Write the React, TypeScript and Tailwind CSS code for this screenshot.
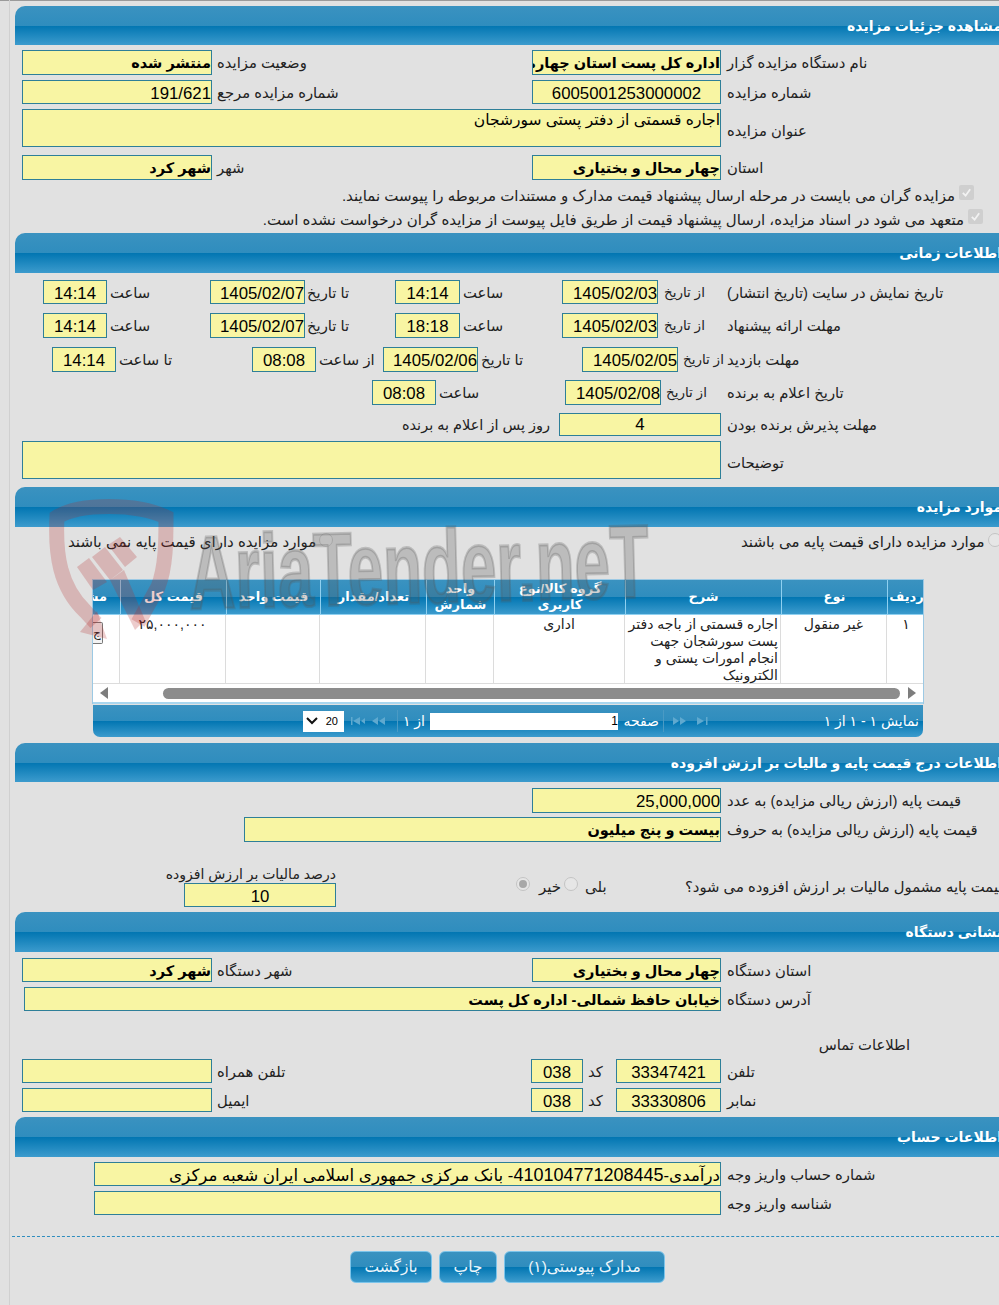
import React from "react";

const font = { fontFamily: '"Liberation Sans","DejaVu Sans",sans-serif' };
const grad = "bg-[linear-gradient(to_bottom,#3a92c0_0%,#2f8dbe_50%,#0276b2_51%,#3c9bcd_100%)]";

function Head({ children, className = "" }: { children: React.ReactNode; className?: string }) {
  return (
    <div dir="rtl" className={"h-[39px] w-[1000px] rounded-tl-[10px] bg-[linear-gradient(to_bottom,#3a92c0_0%,#2f8dbe_50%,#0276b2_51%,#3c9bcd_100%)] text-white font-bold text-[14px] leading-[40px] pr-[13px] whitespace-nowrap " + className}>
      {children}
    </div>
  );
}

function F({ className, children, center, bold }: { className: string; children?: React.ReactNode; center?: boolean; bold?: boolean }) {
  return (
    <div dir="rtl" className={"shrink-0 overflow-hidden whitespace-nowrap border border-[#2e7f98] bg-[#f8f5a3] text-black leading-[25px] " + (center ? "text-center " : "text-right ") + (bold ? "font-bold text-[14.500px] " : "text-[16.800px] ") + className}>
      {children}
    </div>
  );
}

function L({ className = "", children }: { className?: string; children: React.ReactNode }) {
  return (
    <div dir="rtl" className={"shrink-0 whitespace-nowrap text-left text-[14.800px] text-[#222] pt-[2px] " + className}>
      {children}
    </div>
  );
}

function Radio({ className = "", checked }: { className?: string; checked?: boolean }) {
  return (
    <span className={"shrink-0 w-[14px] h-[14px] rounded-full border border-[#c4c4c4] bg-[#e6e6e6] flex items-center justify-center " + className}>
      {checked && <span className="w-[8px] h-[8px] rounded-full bg-[#a8a8a8]" />}
    </span>
  );
}

function Check() {
  return (
    <span className="shrink-0 w-[15px] h-[15px] rounded-[2px] bg-[#cfcfcf] flex items-center justify-center">
      <svg width="11" height="11" viewBox="0 0 12 12" fill="none" stroke="#f2f2f2" strokeWidth="2"><path d="M2 6.5l3 3 5-7" /></svg>
    </span>
  );
}

function PagerIcon({ d }: { d: string }) {
  return (
    <svg width="16" height="10" viewBox="0 0 16 10" fill="#5fa9cf"><path d={d} /></svg>
  );
}

const cols = [27, 106, 94, 106, 68, 131, 156, 106, 38];
const heads: React.ReactNode[] = ["مشاهده", "قیمت کل", "قیمت واحد", "تعداد/مقدار", "واحد شمارش", "گروه کالا/نوع کاربری", "شرح", "نوع", "ردیف"];

function Table() {
  return (
    <div className="ml-[77px] mt-[28px] w-[832px] h-[126px] overflow-hidden">
      <div className="border-x border-t border-[#9cc9e4] bg-white">
        <div className={"flex h-[35px] border-b border-[#8fd0f0] " + grad}>
          {heads.map((h, i) => (
            <div key={i} dir="rtl" style={{ width: cols[i] }} className={"shrink-0 overflow-hidden border-l border-[#8fd0f0] first:border-l-0 flex items-center text-center text-white font-bold text-[13px] leading-[16px] " + (i === 0 ? "justify-start whitespace-nowrap pr-[13px]" : "justify-center whitespace-normal px-[2px]")}>
              {h}
            </div>
          ))}
        </div>
        <div className="flex h-[69px] border-b border-[#dcdcdc] text-[14px] text-[#222]">
          <div style={{ width: cols[0] }} className="shrink-0 border-r border-[#dcdcdc] overflow-hidden pt-[7px]">
            <div className="w-[10px] h-[22px] border border-l-0 border-[#777] rounded-r-[2px] bg-[#f3f3f3] text-[12px] leading-[20px] overflow-hidden">ج</div>
          </div>
          <div dir="rtl" style={{ width: cols[1] }} className="shrink-0 border-r border-[#dcdcdc] text-center leading-[17px] pt-[1px]">۲۵,۰۰۰,۰۰۰</div>
          <div style={{ width: cols[2] }} className="shrink-0 border-r border-[#dcdcdc]" />
          <div style={{ width: cols[3] }} className="shrink-0 border-r border-[#dcdcdc]" />
          <div style={{ width: cols[4] }} className="shrink-0 border-r border-[#dcdcdc]" />
          <div dir="rtl" style={{ width: cols[5] }} className="shrink-0 border-r border-[#dcdcdc] text-center leading-[17px] pt-[1px]">اداری</div>
          <div dir="rtl" style={{ width: cols[6] }} className="shrink-0 border-r border-[#dcdcdc] pr-[2px] pl-[2px] pt-[1px] leading-[17px] text-right">اجاره قسمتی از باجه دفتر پست سورشجان جهت انجام امورات پستی و الکترونیک</div>
          <div dir="rtl" style={{ width: cols[7] }} className="shrink-0 border-r border-[#dcdcdc] text-center leading-[17px] pt-[1px]">غیر منقول</div>
          <div dir="rtl" style={{ width: cols[8] }} className="shrink-0 text-center leading-[17px] pt-[1px]">۱</div>
        </div>
        <div className="flex items-center h-[20px] pl-[7px] border-b-[2px] border-[#a9d6ee]">
          <svg className="shrink-0" width="8" height="12" viewBox="0 0 8 12" fill="#7d7d7d"><path d="M8 0v12L0 6z" /></svg>
          <div className="shrink-0 w-[737px] h-[11px] rounded-full bg-[#8c8c8c] ml-[55px]" />
          <svg className="shrink-0 ml-[8px]" width="8" height="12" viewBox="0 0 8 12" fill="#7d7d7d"><path d="M0 0v12l8-6z" /></svg>
        </div>
      </div>
    </div>
  );
}

function Pager() {
  return (
    <div className={"ml-[78px] w-[830px] h-[32px] rounded-b-[7px] flex items-center text-white text-[14px] " + grad}>
      <div className="ml-[210px] w-[41px] h-[21px] bg-white text-black flex items-center justify-between pl-[3px] pr-[6px] text-[11px]">
        <svg width="12" height="8" viewBox="0 0 12 8" fill="none" stroke="#111" strokeWidth="2"><path d="M1 1l5 5 5-5" /></svg>
        <span>20</span>
      </div>
      <div className="ml-[6px] flex gap-[4px]">
        <PagerIcon d="M1 1h1.500v8H1zM10 1v8L3 5zM15 2v6l-4-3z" />
        <PagerIcon d="M8 1v8L2 5zM15 1v8L9 5z" />
      </div>
      <div className="ml-[11px] w-px h-[22px] bg-[#4a9ac4]" />
      <div dir="rtl" className="ml-[6px] w-[21px] text-left whitespace-nowrap">از ۱</div>
      <div className="ml-[5px] w-[188px] h-[17px] bg-white text-black text-right text-[12px] leading-[17px]">1</div>
      <div dir="rtl" className="ml-[5px] w-[36px] whitespace-nowrap">صفحه</div>
      <div className="ml-[4px] w-px h-[22px] bg-[#4a9ac4]" />
      <div className="ml-[8px] flex gap-[8px]">
        <PagerIcon d="M1 1v8l6-4zM8 1v8l6-4z" />
        <PagerIcon d="M1 1v8l7-4zM10 1h1.500v8H10z" />
      </div>
      <div dir="rtl" className="ml-auto pr-[4px] whitespace-nowrap">نمایش ۱ - ۱ از ۱</div>
    </div>
  );
}

function Watermark() {
  return (
    <svg className="absolute left-[40px] top-[495px] pointer-events-none" width="640" height="170" viewBox="0 0 640 170">
      <g stroke="#b52a2a" strokeOpacity="0.24" fill="none" strokeWidth="15">
        <path d="M98 128 L118 92 C126 72 126 45 126 22 C96 8 40 8 17 22 C15 60 20 92 45 116 L56 128" />
      </g>
      <g fill="#b52a2a" fillOpacity="0.24">
        <path d="M57 116L67 144 40 137z" />
        <path d="M68 50L80 42 97 62 85 72z" />
        <path d="M52 62L65 52 83 75 70 85z" />
        <path d="M37 72L49 63 67 87 53 95z" />
        <path d="M70 85L84 75 105 125 95 135z" />
      </g>
      <text x="150" y="114" transform="rotate(-1.500 150 114)" textLength="460" lengthAdjust="spacingAndGlyphs" fontFamily="Liberation Sans, sans-serif" fontWeight="700" fontSize="104" fill="#555" fillOpacity="0.26" stroke="#555" strokeOpacity="0.26" strokeWidth="3">AriaTender.neT</text>
    </svg>
  );
}

export default function App() {
  return (
    <div style={font} className="relative w-[999px] h-[1305px] overflow-hidden bg-[#e1e1e1] text-[15px]">
      <div className="absolute left-0 top-0 w-full h-[1px] bg-[#9a9a9a]" />
      <div className="absolute left-[9px] top-0 w-px h-full bg-[#d0d0d0]" />
      <div className="pl-[15px] pt-[6px] w-[1015px]">
        <Head>مشاهده جزئیات مزایده</Head>
        <div className="flex items-center mt-[5px] ml-[7px] h-[25px]">
          <F bold className="w-[190px] h-[25px]">منتشر شده</F>
          <L className="ml-[5px] w-[315px]">وضعیت مزایده</L>
          <F bold className="w-[189px] h-[25px]">اداره کل پست استان چهارمحال و بختیاری</F>
          <L className="ml-[6px]">نام دستگاه مزایده گزار</L>
        </div>
        <div className="flex items-center mt-[5px] ml-[7px] h-[24px]">
          <F className="w-[190px] h-[24px]">191/621</F>
          <L className="ml-[5px] w-[315px]">شماره مزایده مرجع</L>
          <F center className="w-[189px] h-[24px]">6005001253000002</F>
          <L className="ml-[6px]">شماره مزایده</L>
        </div>
        <div className="flex items-center mt-[5px] ml-[7px] h-[38px]">
          <F className="w-[699px] h-[38px] !text-[15.500px] !leading-[20px]">اجاره قسمتی از دفتر پستی سورشجان</F>
          <L className="ml-[6px] !pt-[6px]">عنوان مزایده</L>
        </div>
        <div className="flex items-center mt-[8px] ml-[7px] h-[25px]">
          <F bold className="w-[190px] h-[25px]">شهر کرد</F>
          <L className="ml-[5px] w-[315px]">شهر</L>
          <F bold className="w-[189px] h-[25px]">چهار محال و بختیاری</F>
          <L className="ml-[6px]">استان</L>
        </div>
        <div dir="rtl" className="flex items-center gap-[4px] mt-[4px] mr-[41px] h-[24px] whitespace-nowrap text-[#222]">
          <span className="mt-[-7px] flex"><Check /></span>
          <span>مزایده گران می بایست در مرحله ارسال پیشنهاد قیمت مدارک و مستندات مربوطه را پیوست نمایند.</span>
        </div>
        <div dir="rtl" className="flex items-center gap-[4px] mr-[32px] h-[24px] whitespace-nowrap text-[#222]">
          <span className="mt-[-7px] flex"><Check /></span>
          <span>متعهد می شود در اسناد مزایده، ارسال پیشنهاد قیمت از طریق فایل پیوست از مزایده گران درخواست نشده است.</span>
        </div>
        <Head className="mt-[1px] !h-[40px]">اطلاعات زمانی</Head>

        <div className="flex items-center mt-[7px] ml-[28px] h-[24px]">
          <F center className="w-[64px] h-[24px]">14:14</F>
          <L className="ml-[3px] w-[100px]">ساعت</L>
          <F className="w-[95px] h-[24px]">1405/02/07</F>
          <L className="ml-[2px] w-[88px]">تا تاریخ</L>
          <F center className="w-[65px] h-[24px]">14:14</F>
          <L className="ml-[3px] w-[99px]">ساعت</L>
          <F className="w-[96px] h-[24px]">1405/02/03</F>
          <L className="ml-[6px] w-[63px] !text-[13.500px]">از تاریخ</L>
          <L>تاریخ نمایش در سایت (تاریخ انتشار)</L>
        </div>
        <div className="flex items-center mt-[9px] ml-[28px] h-[25px]">
          <F center className="w-[64px] h-[25px]">14:14</F>
          <L className="ml-[3px] w-[100px]">ساعت</L>
          <F className="w-[95px] h-[25px]">1405/02/07</F>
          <L className="ml-[2px] w-[88px]">تا تاریخ</L>
          <F center className="w-[65px] h-[25px]">18:18</F>
          <L className="ml-[3px] w-[99px]">ساعت</L>
          <F className="w-[96px] h-[25px]">1405/02/03</F>
          <L className="ml-[6px] w-[63px] !text-[13.500px]">از تاریخ</L>
          <L>مهلت ارائه پیشنهاد</L>
        </div>
        <div className="flex items-center mt-[9px] ml-[37px] h-[25px]">
          <F center className="w-[64px] h-[25px]">14:14</F>
          <L className="ml-[3px] w-[133px]">تا ساعت</L>
          <F center className="w-[64px] h-[25px]">08:08</F>
          <L className="ml-[3px] w-[64px]">از ساعت</L>
          <F className="w-[95px] h-[25px]">1405/02/06</F>
          <L className="ml-[3px] w-[101px]">تا تاریخ</L>
          <F className="w-[96px] h-[25px]">1405/02/05</F>
          <L className="ml-[5px] w-[44px] !text-[13.500px]">از تاریخ</L>
          <L>مهلت بازدید</L>
        </div>
        <div className="flex items-center mt-[8px] ml-[357px] h-[25px]">
          <F center className="w-[64px] h-[25px]">08:08</F>
          <L className="ml-[3px] w-[126px]">ساعت</L>
          <F className="w-[96px] h-[25px]">1405/02/08</F>
          <L className="ml-[5px] w-[61px] !text-[13.500px]">از تاریخ</L>
          <L>تاریخ اعلام به برنده</L>
        </div>
        <div className="flex items-center mt-[8px] h-[23px]">
          <div dir="rtl" className="w-[535px] shrink-0 text-[14.500px] text-[#222] text-right whitespace-nowrap pt-[2px]">روز پس از اعلام به برنده</div>
          <F center className="ml-[9px] w-[162px] h-[23px] !leading-[21px]">4</F>
          <L className="ml-[6px]">مهلت پذیرش برنده بودن</L>
        </div>
        <div className="flex items-center mt-[5px] ml-[7px] h-[38px]">
          <F className="w-[699px] h-[38px]" />
          <L className="ml-[6px] !pt-[6px]">توضیحات</L>
        </div>
        <Head className="mt-[8px] !h-[40px]">موارد مزایده</Head>

        <div className="relative">
          <div dir="rtl" className="absolute left-[726px] top-[4px] h-[22px] flex items-center gap-[3px] whitespace-nowrap text-[#222]">
            <Radio className="mt-[-4px]" />
            <span>موارد مزایده دارای قیمت پایه می باشند</span>
          </div>
          <div dir="rtl" className="absolute left-[53px] top-[4px] h-[22px] flex items-center gap-[3px] whitespace-nowrap text-[#222]">
            <Radio className="mt-[-4px]" />
            <span>موارد مزایده دارای قیمت پایه نمی باشند</span>
          </div>
        </div>
        <div className="pt-[24px]">
          <Table />
          <Pager />
        </div>

        <Head className="mt-[6px]">اطلاعات درج قیمت پایه و مالیات بر ارزش افزوده</Head>
        <div className="flex items-center mt-[6px] ml-[517px] h-[25px]">
          <F className="w-[189px] h-[25px]">25,000,000</F>
          <L className="ml-[6px]">قیمت پایه (ارزش ریالی مزایده) به عدد</L>
        </div>
        <div className="flex items-center mt-[4px] ml-[229px] h-[25px]">
          <F bold className="w-[477px] h-[25px]">بیست و پنج میلیون</F>
          <L className="ml-[6px]">قیمت پایه (ارزش ریالی مزایده) به حروف</L>
        </div>
        <div className="flex items-end mt-[24px] ml-[146px] h-[41px]">
          <div className="w-[175px] shrink-0 flex flex-col items-end">
            <div dir="rtl" className="text-[14px] leading-[16px] text-[#222] whitespace-nowrap">درصد مالیات بر ارزش افزوده</div>
            <F center className="w-[152px] h-[24px] mt-[1px]">10</F>
          </div>
          <div className="ml-[180px] mb-[8px] h-[24px] flex items-center whitespace-nowrap text-[#222]">
            <Radio className="mt-[-6px]" checked />
            <span className="ml-[9px] w-[21px]">خیر</span>
            <Radio className="ml-[4px] mt-[-6px]" />
            <span className="ml-[7px] w-[100px] text-left">بلی</span>
            <span dir="rtl" className="text-[14.800px]">قیمت پایه مشمول مالیات بر ارزش افزوده می شود؟</span>
          </div>
        </div>

        <Head className="mt-[5px] !h-[40px]">نشانی دستگاه</Head>
        <div className="flex items-center mt-[6px] ml-[7px] h-[24px]">
          <F bold className="w-[190px] h-[24px]">شهر کرد</F>
          <L className="ml-[5px] w-[315px]">شهر دستگاه</L>
          <F bold className="w-[189px] h-[24px]">چهار محال و بختیاری</F>
          <L className="ml-[6px]">استان دستگاه</L>
        </div>
        <div className="flex items-center mt-[5px] ml-[9px] h-[24px]">
          <F bold className="w-[697px] h-[24px]">خیابان حافظ شمالی- اداره کل پست</F>
          <L className="ml-[6px]">آدرس دستگاه</L>
        </div>
        <div dir="rtl" className="mt-[24px] mr-[105px] h-[20px] leading-[20px] text-[#222] text-[14.800px] whitespace-nowrap">اطلاعات تماس</div>
        <div className="flex items-center mt-[4px] ml-[7px] h-[24px]">
          <F className="w-[190px] h-[24px]" />
          <L className="ml-[5px] w-[314px]">تلفن همراه</L>
          <F center className="w-[52px] h-[24px]">038</F>
          <L className="ml-[5px] w-[28px]">کد</L>
          <F center className="w-[105px] h-[24px]">33347421</F>
          <L className="ml-[6px]">تلفن</L>
        </div>
        <div className="flex items-center mt-[5px] ml-[7px] h-[24px]">
          <F className="w-[190px] h-[24px]" />
          <L className="ml-[5px] w-[314px]">ایمیل</L>
          <F center className="w-[52px] h-[24px]">038</F>
          <L className="ml-[5px] w-[28px]">کد</L>
          <F center className="w-[105px] h-[24px]">33330806</F>
          <L className="ml-[6px]">نمابر</L>
        </div>
        <Head className="mt-[5px] !h-[40px]">اطلاعات حساب</Head>
        <div className="flex items-center mt-[5px] ml-[79px] h-[24px]">
          <F className="w-[627px] h-[24px] !text-[16.700px]">درآمدی-<span className="text-[18px]">410104771208445</span>- بانک مرکزی جمهوری اسلامی ایران شعبه مرکزی</F>
          <L className="ml-[6px]">شماره حساب واریز وجه</L>
        </div>
        <div className="flex items-center mt-[5px] ml-[79px] h-[24px]">
          <F className="w-[627px] h-[24px]" />
          <L className="ml-[6px]">شناسه واریز وجه</L>
        </div>
      </div>
      <div className="ml-[12px] mt-[21px] border-t border-dashed border-[#2f8dbe]" />
      <div className="flex mt-[14px] ml-[350px] gap-[7px] text-[#eef6fb] text-[15.500px]">
        {[["بازگشت", "w-[82px]"], ["چاپ", "w-[58px]"], ["مدارک پیوستی(۱)", "w-[161px]"]].map(([t, w]) => (
          <div key={t} dir="rtl" className={"h-[32px] leading-[30px] text-center rounded-[6px] border border-[#7cc4ea] " + grad + " " + w}>{t}</div>
        ))}
      </div>
      <Watermark />
    </div>
  );
}
